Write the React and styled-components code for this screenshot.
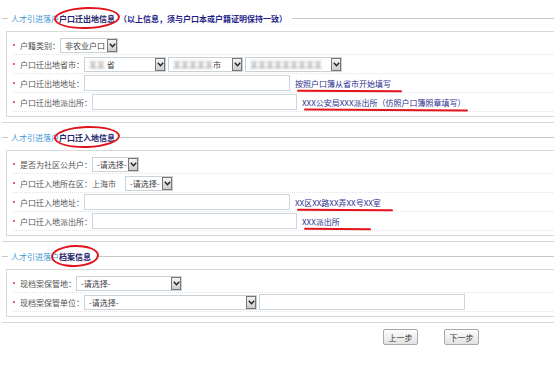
import styled, { createGlobalStyle } from "styled-components";

const Global = createGlobalStyle`
  html, body {
    margin: 0;
    padding: 0;
    background: #fff;
    overflow: hidden;
  }
  body {
    font-family: "Noto Sans CJK SC", "DejaVu Sans", sans-serif;
  }
`;

const Page = styled.div`
  width: 554px;
  overflow: hidden;
  padding-top: 8px;
  font-size: 8px;
  color: #555;
`;

const Section = styled.section`
  margin: 0 -8px 0 2px;
  padding-bottom: 5px;
  border-bottom: 1px solid #d6d6d6;

  & + & {
    margin-top: 4px;
  }
`;

const Legend = styled.div`
  display: flex;
  align-items: center;
  height: 20px;
  line-height: 11px;
  white-space: nowrap;

  &::before {
    content: "";
    width: 6px;
    height: 1px;
    margin-right: 3px;
    background: #c8c8c8;
  }

  &::after {
    content: "";
    flex: 1;
    height: 1px;
    margin-left: 5px;
    background: #c8c8c8;
  }
`;

const Crumb = styled.span`
  color: #3d97d3;
`;

const Marked = styled.span`
  position: relative;
  color: #25256e;
  font-weight: 600;

  &::after {
    content: "";
    position: absolute;
    top: -6px;
    bottom: -5px;
    left: -${(p) => p.$padX || 5}px;
    right: -${(p) => p.$padX || 5}px;
    border: 2px solid #e0141c;
    border-radius: 50%;
    transform: rotate(-2deg);
  }
`;

const Note = styled.span`
  margin-left: 4px;
  color: #1f1f8a;
  font-weight: 700;
`;

const Box = styled.div`
  margin: 3px 0 0 4px;
  padding: 4px 0 4px 6px;
  border: 1px solid #d9d9d9;
`;

const Row = styled.div`
  display: flex;
  align-items: center;
  height: 19px;
  box-sizing: border-box;
  border-bottom: 1px dotted #e4e4e4;
  white-space: nowrap;

  &::before {
    content: "";
    width: 2px;
    height: 2px;
    margin-right: 5px;
    border-radius: 50%;
    background: #e0303a;
  }
`;

const Label = styled.span`
  color: #555;
`;

const Plain = styled.span`
  color: #555;
  margin-right: 9px;
`;

const SelectBox = styled.div`
  display: flex;
  width: ${(p) => p.$w}px;
  height: 15px;
  margin-right: 2px;
  box-sizing: border-box;
  border: 1px solid #c9d2d8;
  background: #fff;
`;

const SelectText = styled.span`
  flex: 1;
  padding-left: 4px;
  line-height: 13px;
  color: #444;
  overflow: hidden;
`;

const Arrow = styled.span`
  display: flex;
  align-items: center;
  justify-content: center;
  width: 10px;
  box-sizing: border-box;
  border: 1px solid #777;
  background: linear-gradient(#f4f4f4, #cdcdcd);
`;

const Blur = styled.span`
  display: inline-block;
  color: #9a9a9a;
  filter: blur(1.3px);
`;

const Input = styled.div`
  width: ${(p) => p.$w}px;
  height: 16px;
  box-sizing: border-box;
  border: 1px solid #cbd6de;
  background: #fff;
`;

const Hint = styled.span`
  position: relative;
  margin-left: 5px;
  color: #2b2f8f;

  &::after {
    content: "";
    position: absolute;
    left: 2px;
    right: -${(p) => p.$ext || 10}px;
    bottom: -3px;
    height: 2px;
    border-radius: 1px;
    background: #e3141b;
    transform: rotate(0.4deg);
  }
`;

const Buttons = styled.div`
  display: flex;
  gap: 26px;
  padding: 6px 0 0 383px;
`;

const Button = styled.button`
  width: 35px;
  height: 16px;
  padding: 0;
  font-family: inherit;
  font-size: 8px;
  color: #333;
  border: 1px solid #a9a9a9;
  border-radius: 2px;
  background: linear-gradient(#fdfdfd, #e2e2e2);
`;

const Chevron = () => (
  <svg width="7" height="5" viewBox="0 0 7 5">
    <polyline points="0.8,0.8 3.5,3.8 6.2,0.8" fill="none" stroke="#222" strokeWidth="1.4" />
  </svg>
);

const Select = ({ w, children }) => (
  <SelectBox $w={w}>
    <SelectText>{children}</SelectText>
    <Arrow>
      <Chevron />
    </Arrow>
  </SelectBox>
);

export default function App() {
  return (
    <Page>
      <Global />

      <Section>
        <Legend>
          <Crumb>人才引进落户</Crumb>
          <Marked>户口迁出地信息</Marked>
          <Note>（以上信息，须与户口本或户籍证明保持一致）</Note>
        </Legend>
        <Box>
          <Row>
            <Label>户籍类别：</Label>
            <Select w={58}>非农业户口</Select>
          </Row>
          <Row>
            <Label>户口迁出地省市：</Label>
            <Select w={82}>
              <Blur>某某</Blur> 省
            </Select>
            <Select w={75}>
              <Blur>某某某某某</Blur>市
            </Select>
            <Select w={97}>
              <Blur>某某某某某某某某某</Blur>
            </Select>
          </Row>
          <Row>
            <Label>户口迁出地地址：</Label>
            <Input $w={206} />
            <Hint $ext={11}>按照户口簿从省市开始填写</Hint>
          </Row>
          <Row>
            <Label>户口迁出地派出所：</Label>
            <Input $w={205} />
            <Hint $ext={2}>XXX公安局XXX派出所（仿照户口簿照章填写）</Hint>
          </Row>
        </Box>
      </Section>

      <Section>
        <Legend>
          <Crumb>人才引进落户</Crumb>
          <Marked>户口迁入地信息</Marked>
        </Legend>
        <Box>
          <Row>
            <Label>是否为社区公共户：</Label>
            <Select w={47}>-请选择-</Select>
          </Row>
          <Row>
            <Label>户口迁入地所在区：</Label>
            <Plain>上海市</Plain>
            <Select w={48}>-请选择-</Select>
          </Row>
          <Row>
            <Label>户口迁入地地址：</Label>
            <Input $w={206} />
            <Hint $ext={12}>XX区XX路XX弄XX号XX室</Hint>
          </Row>
          <Row>
            <Label>户口迁入地派出所：</Label>
            <Input $w={205} />
            <Hint $ext={31}>XXX派出所</Hint>
          </Row>
        </Box>
      </Section>

      <Section>
        <Legend>
          <Crumb>人才引进落户</Crumb>
          <Marked $padX={8}>档案信息</Marked>
        </Legend>
        <Box>
          <Row>
            <Label>现档案保管地：</Label>
            <Select w={106}>-请选择-</Select>
          </Row>
          <Row>
            <Label>现档案保管单位：</Label>
            <Select w={173}>-请选择-</Select>
            <Input $w={206} />
          </Row>
        </Box>
      </Section>

      <Buttons>
        <Button>上一步</Button>
        <Button>下一步</Button>
      </Buttons>
    </Page>
  );
}
